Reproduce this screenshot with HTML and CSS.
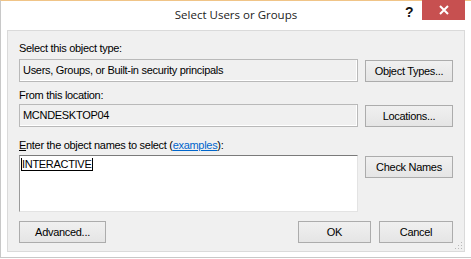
FILE: index.html
```html
<!DOCTYPE html>
<html>
<head>
    <meta charset="utf-8" />
    <title>Select Users or Groups</title>
    <link rel="stylesheet" href="styles.css">
</head>
<body>
    <div class="window">
        <div class="titlebar">
            <span class="title">Select Users or Groups</span>
            <span class="help">?</span>
            <span class="close">
                <svg width="10" height="10" viewBox="0 0 10 10">
                    <path d="M1 1 L9 9 M9 1 L1 9" stroke="#fff" stroke-width="2" />
                </svg>
            </span>
        </div>
        <div class="client">
            <div class="label first">Select this object type:</div>
            <div class="row">
                <div class="field">Users, Groups, or Built-in security principals</div>
                <button class="button">Object Types...</button>
            </div>

            <div class="label second">From this location:</div>
            <div class="row">
                <div class="field">MCNDESKTOP04</div>
                <button class="button">Locations...</button>
            </div>

            <div class="label third"><u>E</u>nter the object names to select (<a href="#">examples</a>):</div>
            <div class="row top">
                <div class="names"><span class="resolved">INTERACTIVE</span></div>
                <button class="button">Check Names</button>
            </div>

            <div class="footer">
                <button class="button">Advanced...</button>
                <div class="footer-right">
                    <button class="button">OK</button>
                    <button class="button">Cancel</button>
                </div>
            </div>
            <div class="grip"></div>
        </div>
    </div>
</body>
</html>
```

FILE: styles.css
```css
body {
    margin: 0;
    background-color: white;
    font-family: 'Liberation Sans', Arial, sans-serif;
    font-size: 11px;
    letter-spacing: -0.3px;
    color: black;
}

.window {
    width: 471px;
    height: 258px;
    box-sizing: border-box;
    border-top: 1px solid #f0c487;
    border-left: 1px solid #c8c8c8;
    border-bottom: 1px solid #c8c8c8;
    background-color: white;
    display: flex;
    flex-direction: column;
}

.titlebar {
    height: 29px;
    position: relative;
    display: flex;
    justify-content: center;
    align-items: center;
}

.title {
    font-family: 'Open Sans', 'Noto Sans', sans-serif;
    font-size: 11.5px;
    letter-spacing: 0;
    color: #222;
    margin-top: -2px;
}

.help {
    position: absolute;
    left: 404px;
    top: 3px;
    font-family: 'Liberation Sans', sans-serif;
    font-weight: bold;
    font-size: 14px;
    color: #111;
}

.close {
    position: absolute;
    left: 421px;
    top: -1px;
    width: 43px;
    height: 20px;
    background-color: #c75050;
    display: flex;
    align-items: center;
    justify-content: center;
}

.client {
    position: relative;
    margin: 0 6px 0 6px;
    height: 222px;
    box-sizing: border-box;
    background-color: #f0f0f0;
    border: 1px solid #dadada;
    padding: 10px 11px 0 11px;
}

.label {
    height: 14px;
    line-height: 14px;
    color: #000;
}

.label.first { margin-bottom: 4px; }
.label.second { margin-top: 6px; margin-bottom: 2px; }
.label.third { margin-top: 11px; margin-bottom: 3px; }

.label a {
    color: #0066cc;
}

.row {
    display: flex;
    gap: 7px;
    align-items: center;
}

.row.top {
    align-items: flex-start;
}

.field {
    flex: 1;
    height: 23px;
    box-sizing: border-box;
    border: 1px solid #b9b9b9;
    box-shadow: inset -1px -1px 0 #fff;
    padding: 0 3px;
    line-height: 21px;
    background-color: #f0f0f0;
}

.button {
    width: 88px;
    height: 22px;
    padding: 0;
    box-sizing: border-box;
    border: 1px solid #acacac;
    background: linear-gradient(#f0f0f0, #e5e5e5);
    font-family: 'Liberation Sans', Arial, sans-serif;
    font-size: 11px;
    letter-spacing: -0.3px;
    color: #000;
}

.names {
    flex: 1;
    height: 57px;
    box-sizing: border-box;
    background-color: white;
    border: 1px solid #e3e3e3;
    border-top-color: #7a7a7a;
    border-left-color: #9a9a9a;
    padding: 2px 1px;
    line-height: 13px;
}

.row.top .button {
    margin-top: 1px;
}

.resolved {
    display: inline-block;
    border-left: 1px solid #000;
    border-right: 1px solid #000;
    border-bottom: 1px solid #000;
    padding: 0 1px 0 0;
    line-height: 12px;
}

.footer {
    display: flex;
    justify-content: space-between;
    margin-top: 9px;
}

.footer .button {
    width: 87px;
}

.footer-right {
    display: flex;
    gap: 8px;
}

.footer-right .button {
    width: 73px;
}

.footer-right .button:last-child {
    width: 74px;
}

.grip {
    position: absolute;
    right: 2px;
    bottom: 2px;
    width: 8px;
    height: 8px;
    background-image: radial-gradient(circle, #b8b8b8 0.8px, transparent 1px);
    background-size: 3px 3px;
    clip-path: polygon(100% 0, 100% 100%, 0 100%);
}
```
